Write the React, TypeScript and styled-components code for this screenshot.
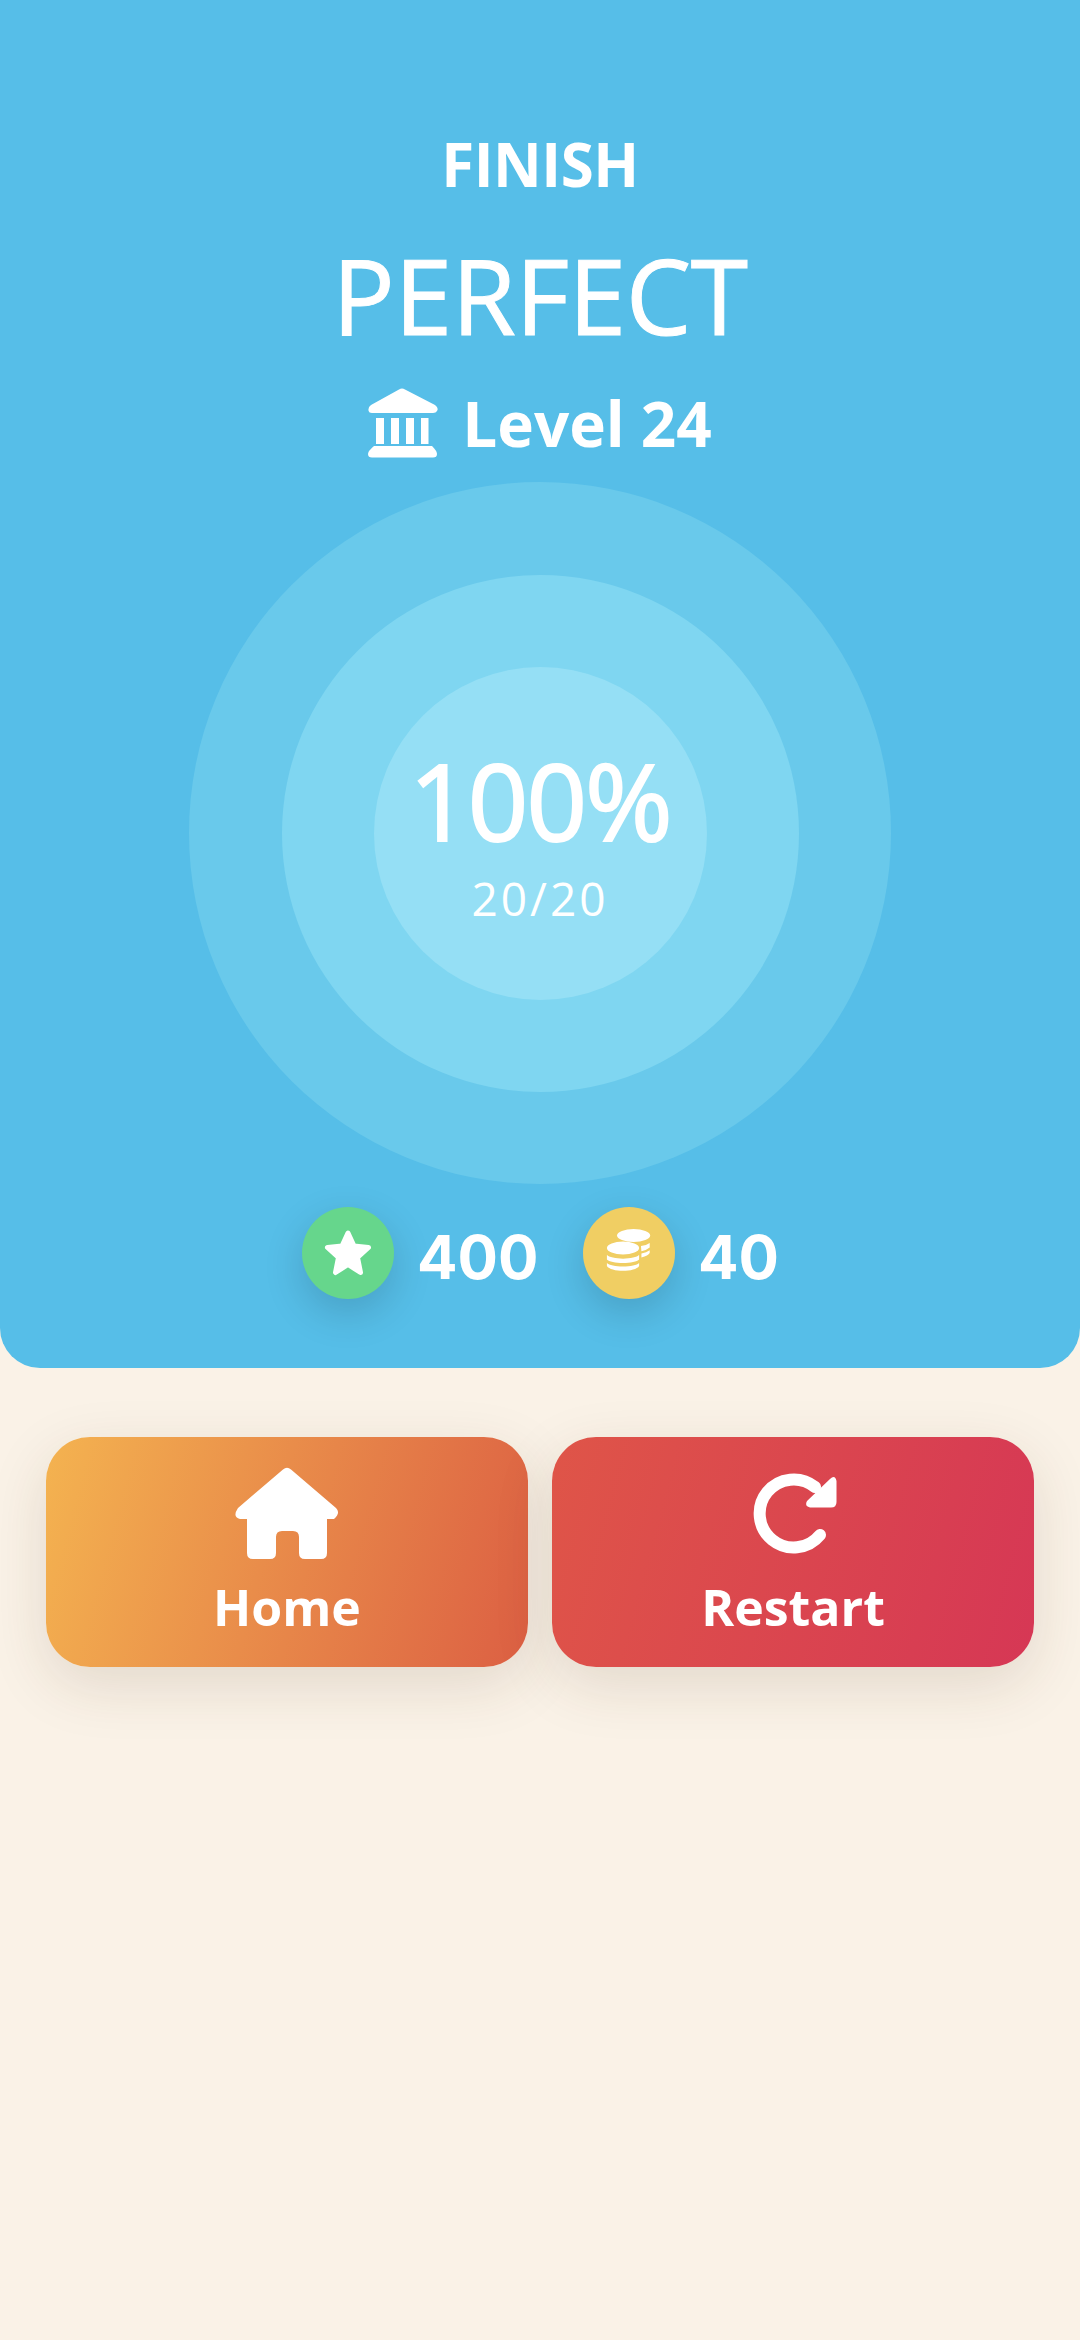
import styled, { createGlobalStyle } from 'styled-components';

const GlobalStyle = createGlobalStyle`
  body {
    margin: 0;
    background: #faf2e7;
    font-family: "Open Sans", "Noto Sans", sans-serif;
    color: #fff;
  }
`;

const Page = styled.div`
  width: 1080px;
  height: 2340px;
  overflow: hidden;
`;

const Hero = styled.header`
  height: 1368px;
  box-sizing: border-box;
  padding-top: 128px;
  background: #56bee8;
  border-radius: 0 0 40px 40px;
  display: flex;
  flex-direction: column;
  align-items: center;
`;

const Finish = styled.div`
  font-size: 60px;
  line-height: 72px;
  font-weight: 700;
  letter-spacing: -0.5px;
`;

const Perfect = styled.div`
  margin-top: 34px;
  font-size: 104px;
  line-height: 122px;
  font-weight: 400;
  letter-spacing: -0.5px;
  -webkit-text-stroke: 1px #fff;
`;

const LevelRow = styled.div`
  margin-top: 32px;
  height: 70px;
  display: flex;
  align-items: center;
  gap: 24px;
`;

const LevelText = styled.span`
  font-size: 62px;
  line-height: 70px;
  font-weight: 700;
`;

const Ring = styled.div<{ $size: number; $bg: string }>`
  width: ${(p) => p.$size}px;
  height: ${(p) => p.$size}px;
  flex: none;
  border-radius: 50%;
  background: ${(p) => p.$bg};
  display: flex;
  flex-direction: column;
  align-items: center;
  justify-content: center;
`;

const OuterRing = styled(Ring)`
  margin-top: 24px;
`;

const Percent = styled.div`
  font-size: 106px;
  line-height: 116px;
  font-weight: 400;
  letter-spacing: -2px;
  -webkit-text-stroke: 2px #fff;
`;

const Score = styled.div`
  margin-top: 14px;
  font-size: 46px;
  line-height: 52px;
  font-weight: 400;
  letter-spacing: 3px;
`;

const Stats = styled.div`
  margin-top: 23px;
  display: flex;
  align-items: center;
`;

const Badge = styled.div<{ $bg: string }>`
  width: 92px;
  height: 92px;
  border-radius: 50%;
  background: ${(p) => p.$bg};
  box-shadow: 0 14px 40px rgba(0, 0, 0, 0.16);
  display: flex;
  align-items: center;
  justify-content: center;
`;

const StatValue = styled.span<{ $width: number }>`
  width: ${(p) => p.$width}px;
  margin-left: 23px;
  padding-top: 8px;
  font-family: Inter, "Open Sans", sans-serif;
  font-size: 60px;
  line-height: 84px;
  font-weight: 700;
`;

const Actions = styled.div`
  padding: 69px 46px 0;
  display: grid;
  grid-template-columns: 1fr 1fr;
  gap: 24px;
`;

const ActionButton = styled.button<{ $from: string; $to: string }>`
  height: 230px;
  padding: 29px 0 0;
  border: 0;
  border-radius: 44px;
  background: linear-gradient(105deg, ${(p) => p.$from}, ${(p) => p.$to});
  box-shadow: 0 18px 60px rgba(70, 50, 20, 0.13);
  color: #fff;
  font-family: inherit;
  display: flex;
  flex-direction: column;
  align-items: center;
`;

const ActionIcon = styled.svg`
  height: 94px;
  display: block;
`;

const ActionLabel = styled.span`
  margin-top: 17px;
  font-size: 50px;
  line-height: 60px;
  font-weight: 700;
`;

function BankIcon() {
  return (
    <svg width="70" height="70" viewBox="9 7 70 70" fill="#fff">
      <path d="M40 8.500Q43 6.500 46 8.500L76 24Q80 27 78 30Q77 32 74 32H13Q10 32 9.500 29.500Q9 26 12 24Z" />
      <rect x="17" y="37" width="8" height="26" />
      <rect x="32" y="37" width="8" height="26" />
      <rect x="47" y="37" width="8" height="26" />
      <rect x="62" y="37" width="7.500" height="26" />
      <path d="M15 65H73Q78 70 78 73Q78 76.500 74 76.500H13Q9 76.500 9 73Q9 70 15 65Z" />
    </svg>
  );
}

function StarIcon() {
  return (
    <svg width="50" height="48" viewBox="0 0 50 48" fill="#fff" stroke="#fff" strokeWidth="5" strokeLinejoin="round">
      <path d="M25 4L31 17L45.500 18.500L34.500 28.500L37.500 43.500L25 35.500L12.500 43.500L15.500 28.500L4.500 18.500L19 17Z" />
    </svg>
  );
}

function CoinsIcon() {
  return (
    <svg width="92" height="92" viewBox="0 0 100 100" fill="#fff">
      <ellipse cx="55" cy="31" rx="18" ry="7" />
      <path d="M63 42.500Q69 41.500 72.500 39V44Q69 47 63.500 48Z" />
      <path d="M63.500 50.500Q69 49.500 72.500 47V50Q71 53 63.500 55Z" />
      <ellipse cx="43.500" cy="44.500" rx="17.500" ry="7" />
      <path d="M26 52C30 57.500 57 57.500 61 52V57C57 62 30 62 26 57Z" />
      <path d="M26 61C30 66 57 66 61 61V64C57 71 30 71 26 64Z" />
    </svg>
  );
}

export default function App() {
  return (
    <Page>
      <GlobalStyle />
      <Hero>
        <Finish>FINISH</Finish>
        <Perfect>PERFECT</Perfect>
        <LevelRow>
          <BankIcon />
          <LevelText>Level 24</LevelText>
        </LevelRow>
        <OuterRing $size={702} $bg="#69c9eb">
          <Ring $size={517} $bg="#7fd6f1">
            <Ring $size={333} $bg="#95dff5">
              <Percent>100%</Percent>
              <Score>20/20</Score>
            </Ring>
          </Ring>
        </OuterRing>
        <Stats>
          <Badge $bg="#66d68c">
            <StarIcon />
          </Badge>
          <StatValue $width={166}>400</StatValue>
          <Badge $bg="#f0ce63">
            <CoinsIcon />
          </Badge>
          <StatValue $width={80}>40</StatValue>
        </Stats>
      </Hero>
      <Actions>
        <ActionButton $from="#f4b350" $to="#dc5f43">
          <ActionIcon viewBox="24 16 106 94">
            <path
              fill="#fff"
              d="M73 19.500Q77 16 81 19.500L126 58Q131 63 124 69H117V103Q117 109 111 109H95Q89 109 89 103V87Q89 81 83 81H72Q66 81 66 87V103Q66 109 60 109H43Q37 109 37 103V69H30Q22 67 28 58Z"
            />
          </ActionIcon>
          <ActionLabel>Home</ActionLabel>
        </ActionButton>
        <ActionButton $from="#df5548" $to="#d63755">
          <ActionIcon viewBox="17 16 90 94">
            <path d="M89 85A34 34 0 1 1 84 37" fill="none" stroke="#fff" strokeWidth="12" strokeLinecap="round" />
            <path fill="#fff" d="M99 29Q104 24 105.500 31V52Q105.500 57.500 100 57.500H79Q73 56 76 51Z" />
          </ActionIcon>
          <ActionLabel>Restart</ActionLabel>
        </ActionButton>
      </Actions>
    </Page>
  );
}
